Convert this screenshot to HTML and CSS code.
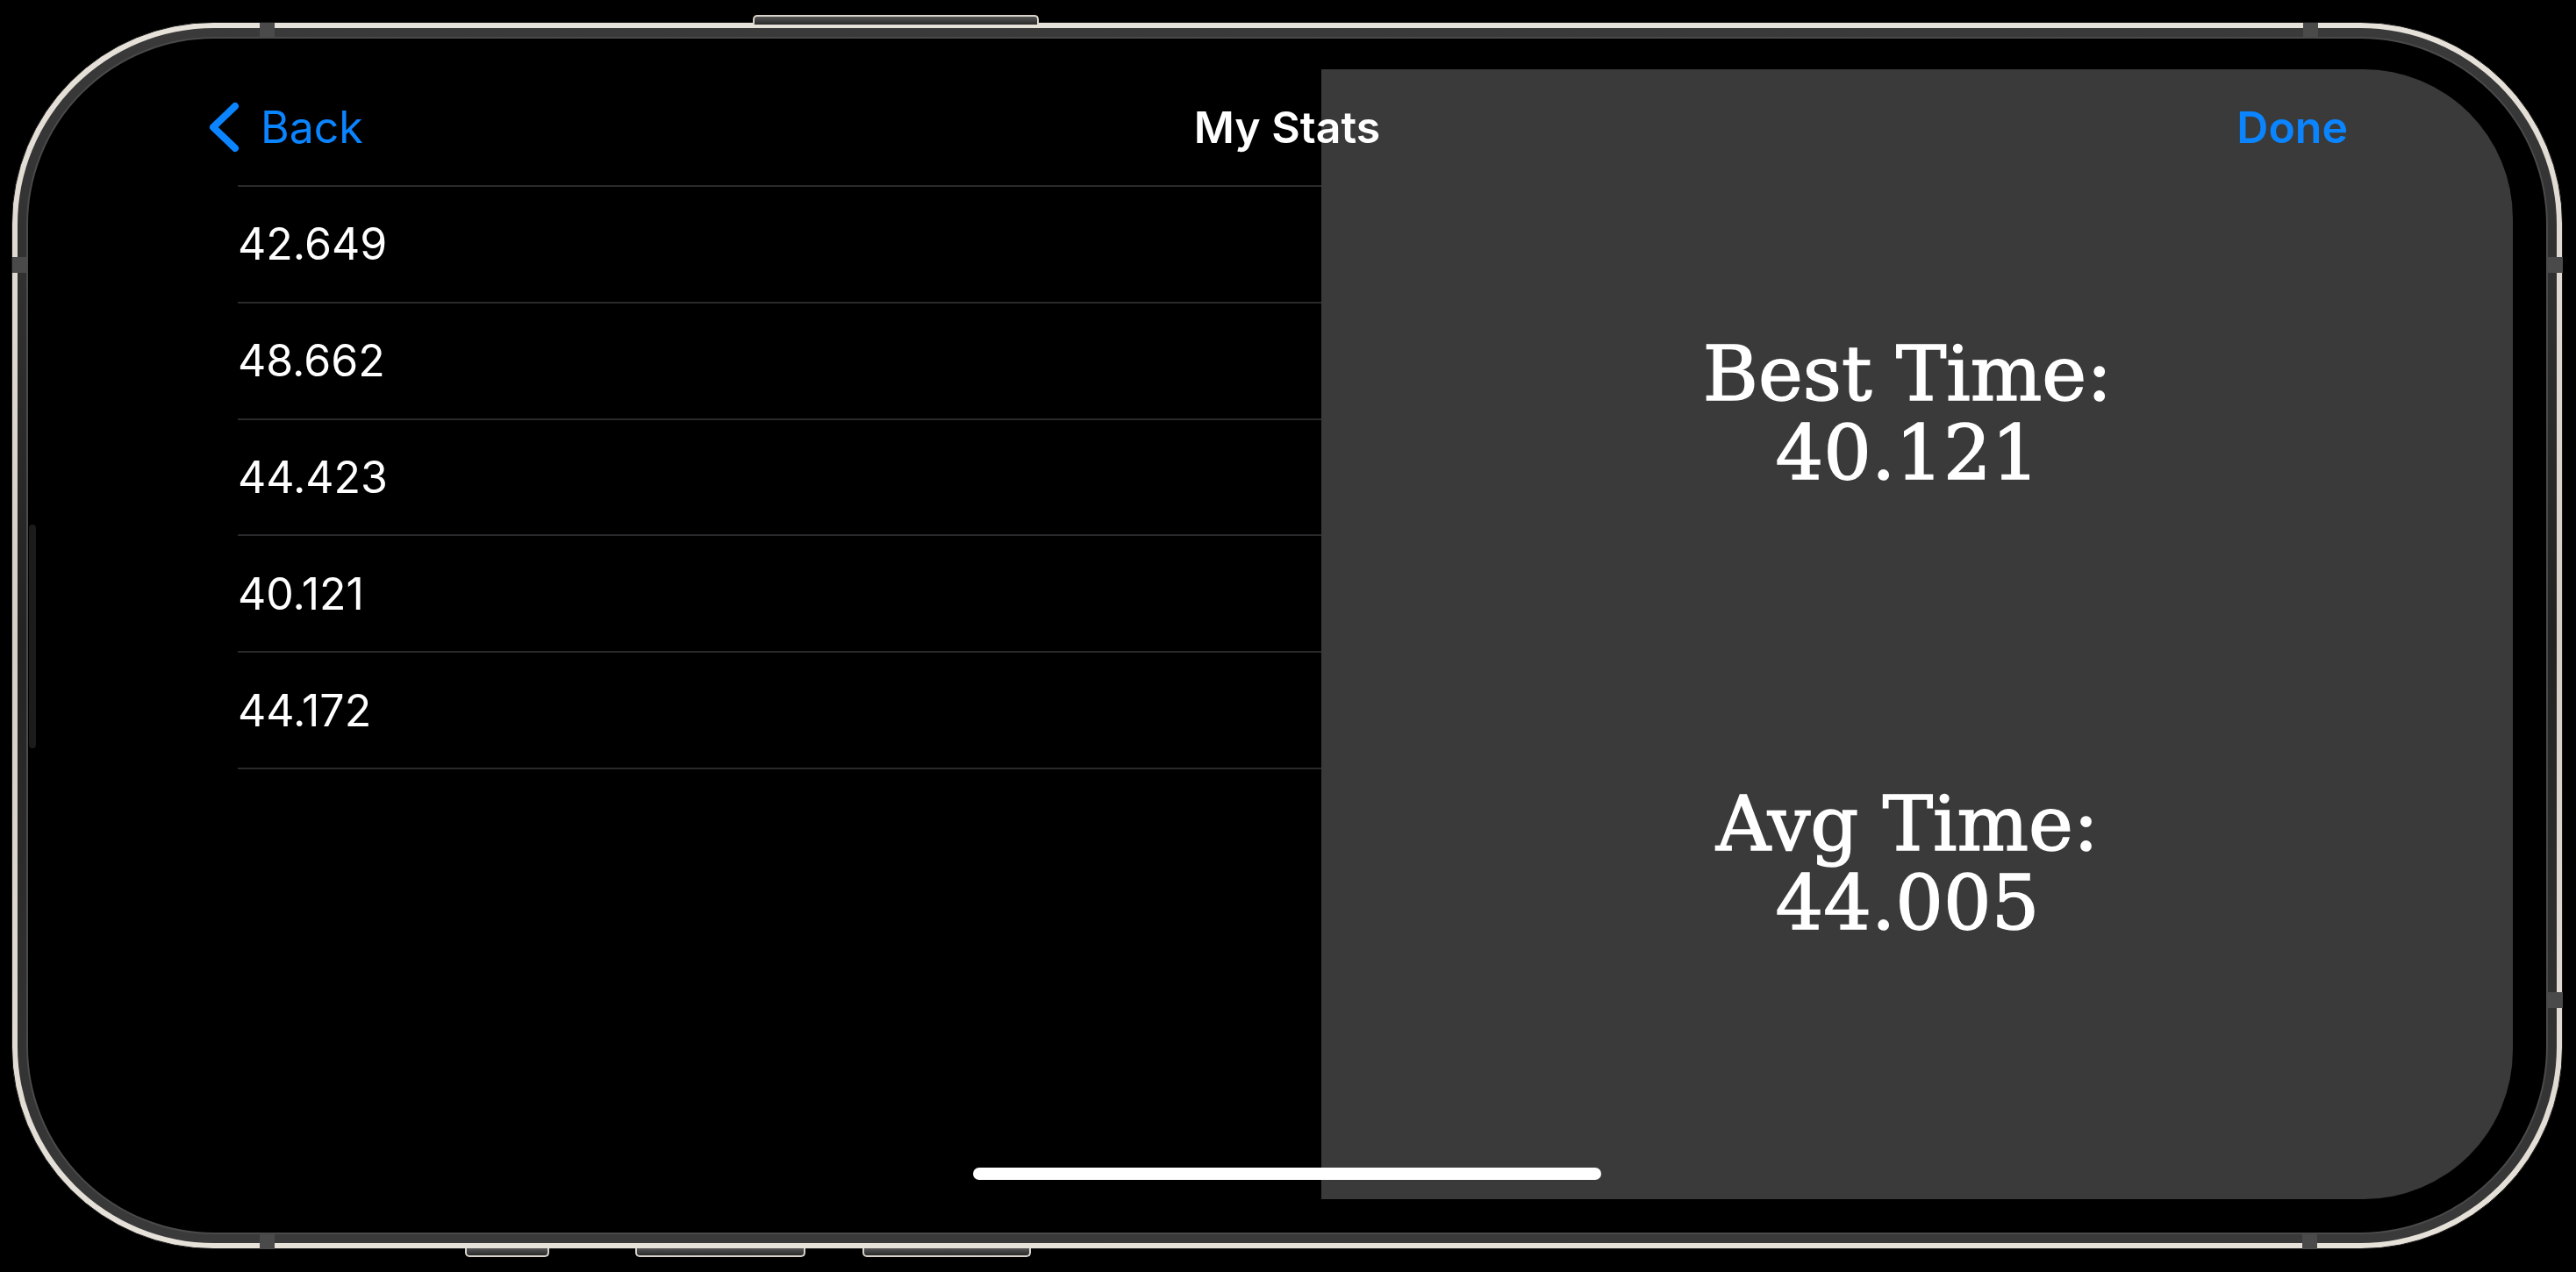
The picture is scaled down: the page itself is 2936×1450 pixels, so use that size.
FILE: index.html
```html
<!DOCTYPE html>
<html lang="en">
<head>
<meta charset="utf-8">
<title>My Stats</title>
<link rel="stylesheet" href="styles.css">
</head>
<body>
<div class="device">
  <div class="band">
    <div class="bezel">
      <div class="screen">
        <div class="nav">
          <div class="nav-left">
            <svg class="chevron" width="36" height="60" viewBox="0 0 36 60"><polyline points="31,6 6,30 31,54" fill="none" stroke="#0a84ff" stroke-width="8" stroke-linecap="round" stroke-linejoin="round"/></svg>
            <span class="nav-link">Back</span>
          </div>
          <div class="nav-title">My Stats</div>
          <div class="nav-right"><span class="nav-link strong">Done</span></div>
        </div>
        <div class="list">
          <div class="row">42.649</div>
          <div class="row">48.662</div>
          <div class="row">44.423</div>
          <div class="row">40.121</div>
          <div class="row">44.172</div>
        </div>
        <div class="sheet">
          <div class="stat"><div class="stat-line">Best Time:</div><div class="stat-line">40.121</div></div>
          <div class="stat"><div class="stat-line">Avg Time:</div><div class="stat-line">44.005</div></div>
        </div>
        <div class="home-indicator"></div>
      </div>
    </div>
  </div>
  <div class="hw-btn top-btn"></div>
  <div class="hw-btn bottom-btn b1"></div>
  <div class="hw-btn bottom-btn b2"></div>
  <div class="hw-btn bottom-btn b3"></div>
  <div class="antenna a-tl"></div>
  <div class="antenna a-tr"></div>
  <div class="antenna a-bl"></div>
  <div class="antenna a-br"></div>
  <div class="antenna side a-l"></div>
  <div class="antenna side a-r1"></div>
  <div class="antenna side a-r2"></div>
  <div class="side-btn"></div>
</div>
</body>
</html>
```

FILE: styles.css
```css
* { box-sizing: border-box; }
html, body {
  margin: 0;
  padding: 0;
  background: #000;
  width: 2936px;
  height: 1450px;
  overflow: hidden;
}
body {
  padding-top: 25px;
  padding-left: 13px;
}
.device {
  position: relative;
  width: 2908px;
  height: 1399px;
  border-radius: 230px;
  border: 1px solid #1a1a1a;
  padding: 6px;
  background: linear-gradient(180deg, #e6e1d9 0%, #d4cec5 50%, #e6e1d9 100%);
}
.band {
  width: 100%;
  height: 100%;
  border-radius: 224px;
  padding: 10px;
  background: linear-gradient(180deg, #3a3a3a 0%, #232323 50%, #3a3a3a 100%);
}
.bezel {
  width: 100%;
  height: 100%;
  border-radius: 214px;
  border: 2px solid #4a4a4a;
  background: #000;
  padding: 35px 0 0 38px;
}
.screen {
  position: relative;
  width: 2794px;
  height: 1288px;
  border-radius: 170px;
  overflow: hidden;
  background: #000;
  display: grid;
  grid-template-columns: 1436px 1fr;
  grid-template-rows: 132px 1fr;
  font-family: Inter, "Noto Sans", sans-serif;
  color: #fff;
}
.nav {
  grid-row: 1;
  grid-column: 1 / -1;
  z-index: 1;
  display: grid;
  grid-template-columns: 1fr auto 1fr;
  align-items: center;
  padding: 0 167px;
  font-size: 50px;
}
.nav-left {
  display: flex;
  align-items: center;
  gap: 24px;
}
.chevron { display: block; }
.nav-link { color: #0a84ff; }
.nav-link.strong { font-weight: 600; }
.nav-title {
  font-weight: 600;
  color: #fff;
}
.nav-right {
  display: flex;
  justify-content: flex-end;
  padding-right: 21px;
}
.list {
  grid-row: 2;
  grid-column: 1;
  margin-left: 201px;
  border-top: 2px solid #2a2a2c;
}
.row {
  height: 132.8px;
  border-bottom: 2px solid #2a2a2c;
  display: flex;
  align-items: center;
  font-size: 50px;
  color: #fff;
}
.sheet {
  grid-row: 1 / -1;
  grid-column: 2;
  background: #3a3a3a;
  padding: 302px 22px 0 0;
  display: flex;
  flex-direction: column;
  align-items: center;
  gap: 333px;
}
.stat {
  font-family: "DejaVu Serif", "Liberation Serif", serif;
  font-size: 86px;
  text-align: center;
  color: #fff;
  -webkit-text-stroke: 1.5px #fff;
}
.stat-line {
  height: 90px;
  line-height: 90px;
}
.home-indicator {
  position: absolute;
  left: 1039px;
  top: 1252px;
  width: 716px;
  height: 14px;
  border-radius: 7px;
  background: #fff;
}
.hw-btn {
  position: absolute;
  background: linear-gradient(180deg, #555 0%, #2a2a2a 100%);
  border: 2px solid #d8d2ca;
}
.top-btn {
  left: 844px;
  top: -9px;
  width: 326px;
  height: 11px;
  border-bottom: none;
  border-radius: 5px 5px 0 0;
}
.bottom-btn {
  top: 1397px;
  height: 10px;
  border-top: none;
  border-radius: 0 0 5px 5px;
}
.b1 { left: 516px; width: 96px; }
.b2 { left: 710px; width: 194px; }
.b3 { left: 969px; width: 192px; }
.antenna {
  position: absolute;
  background: #4a4a4a;
  width: 17px;
  height: 18px;
}
.a-tl { left: 282px; top: 0; }
.a-tr { left: 2611px; top: 0; }
.a-bl { left: 282px; top: 1380px; }
.a-br { left: 2610px; top: 1380px; }
.side { width: 17px; height: 18px; }
.a-l { left: 0; top: 267px; }
.a-r1 { left: 2890px; top: 267px; }
.a-r2 { left: 2890px; top: 1105px; }
.side-btn {
  position: absolute;
  left: 19px;
  top: 572px;
  width: 8px;
  height: 255px;
  border-radius: 4px;
  background: #1b1b1b;
}
```
